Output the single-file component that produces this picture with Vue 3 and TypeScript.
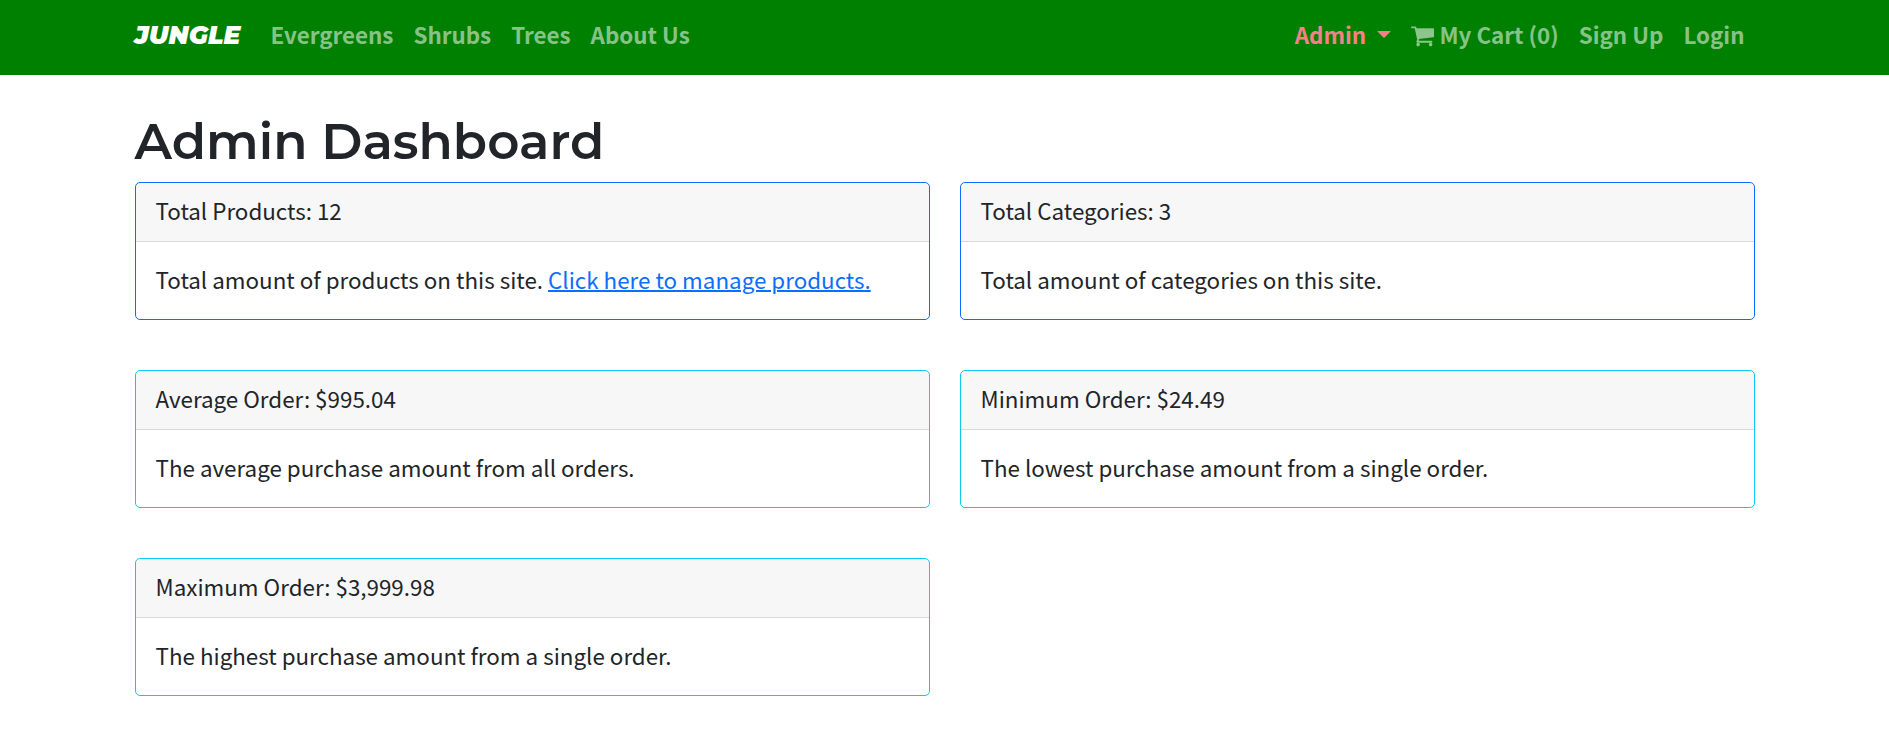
<script setup lang="ts">
interface StatCard {
  title: string
  text: string
  link?: string
  tone: 'primary' | 'info'
}

const categories: string[] = ['Evergreens', 'Shrubs', 'Trees', 'About Us']

const cards: StatCard[] = [
  { title: 'Total Products: 12', text: 'Total amount of products on this site.', link: 'Click here to manage products.', tone: 'primary' },
  { title: 'Total Categories: 3', text: 'Total amount of categories on this site.', tone: 'primary' },
  { title: 'Average Order: $995.04', text: 'The average purchase amount from all orders.', tone: 'info' },
  { title: 'Minimum Order: $24.49', text: 'The lowest purchase amount from a single order.', tone: 'info' },
  { title: 'Maximum Order: $3,999.98', text: 'The highest purchase amount from a single order.', tone: 'info' },
]
</script>

<template>
  <header class="navbar">
    <nav class="container nav-inner">
      <a class="brand">JUNGLE</a>
      <a v-for="name in categories" :key="name" class="nav-link">{{ name }}</a>
      <div class="nav-right">
        <a class="nav-link admin">Admin<span class="caret"></span></a>
        <a class="nav-link cart">
          <svg class="cart-icon" viewBox="0 0 1664 1792" aria-hidden="true">
            <path d="M640 1536q0 52-38 90t-90 38-90-38-38-90 38-90 90-38 90 38 38 90zm896 0q0 52-38 90t-90 38-90-38-38-90 38-90 90-38 90 38 38 90zm128-1088v512q0 24-16.5 42.5t-40.5 21.5l-1044 122q13 60 13 70 0 16-24 64h920q26 0 45 19t19 45-19 45-45 19h-1024q-26 0-45-19t-19-45q0-11 8-31.5t16-36 21.5-40 15.5-29.5l-177-823h-204q-26 0-45-19t-19-45 19-45 45-19h256q16 0 28.5 6.5t19.5 15.5 13 24.5 8 26 5.5 29.5 4.5 26h1201q26 0 45 19t19 45z" />
          </svg>
          <span>My Cart (0)</span>
        </a>
        <a class="nav-link">Sign Up</a>
        <a class="nav-link">Login</a>
      </div>
    </nav>
  </header>

  <main class="container">
    <h1 class="title">Admin Dashboard</h1>
    <section class="grid">
      <article v-for="card in cards" :key="card.title" class="card" :class="card.tone">
        <div class="card-header">{{ card.title }}</div>
        <div class="card-body">
          {{ card.text }}
          <a v-if="card.link" class="link">{{ card.link }}</a>
        </div>
      </article>
    </section>
  </main>
</template>

<style>
body {
  margin: 0;
  background: #fff;
}
</style>

<style scoped>
.navbar,
.container {
  font-family: "Noto Sans CJK SC", "Noto Sans", sans-serif;
  font-size: 22.39px;
  line-height: 37.5px;
  color: #212529;
}
.container {
  box-sizing: border-box;
  width: 1649px;
  margin: 0 auto;
  padding: 0 15px;
}
.navbar {
  height: 75px;
  background: green;
}
.nav-inner {
  display: flex;
  align-items: center;
  height: 71px;
}
.brand {
  width: 106px;
  margin: 0 20px 0 -0.5px;
  color: #fff;
  font-family: Montserrat, Inter, sans-serif;
  font-size: 25px;
  font-weight: 900;
  font-style: italic;
  letter-spacing: 0.15px;
  white-space: nowrap;
}
.nav-link {
  padding: 0 10px 2px;
  color: rgba(255, 255, 255, 0.55);
  font-weight: 700;
  white-space: nowrap;
}
.nav-right {
  display: flex;
  align-items: center;
  margin: 0 -0.5px 0 auto;
}
.admin {
  display: flex;
  align-items: center;
  color: #fa8086;
}
.caret {
  margin: 0 0 0 11px;
  border: 7.5px solid transparent;
  border-top-color: currentColor;
  border-bottom: 0;
}
.cart {
  display: flex;
  align-items: center;
}
.cart-icon {
  width: 23.2px;
  height: 25px;
  margin: 2px 5px 0 0;
  fill: currentColor;
}
.title {
  height: 60px;
  margin: 37px 0 10px -0.5px;
  font-family: Montserrat, Inter, sans-serif;
  font-size: 50px;
  font-weight: 600;
  line-height: 60px;
  white-space: nowrap;
}
.grid {
  display: grid;
  grid-template-columns: 795px 795px;
  gap: 50px 30px;
}
.card {
  box-sizing: border-box;
  height: 138px;
  border: 1px solid #0d6efd;
  border-radius: 5px;
  background: #fff;
  overflow: hidden;
}
.card.info {
  border-color: #0dcaf0;
}
.card-header {
  padding: 9px 19.5px 11.5px;
  border-bottom: 1px solid rgba(0, 0, 0, 0.125);
  background: rgba(0, 0, 0, 0.03);
}
.card-body {
  padding: 19px 19.5px;
}
.link {
  color: #0d6efd;
  text-decoration: underline;
  text-decoration-thickness: 2px;
}
</style>
